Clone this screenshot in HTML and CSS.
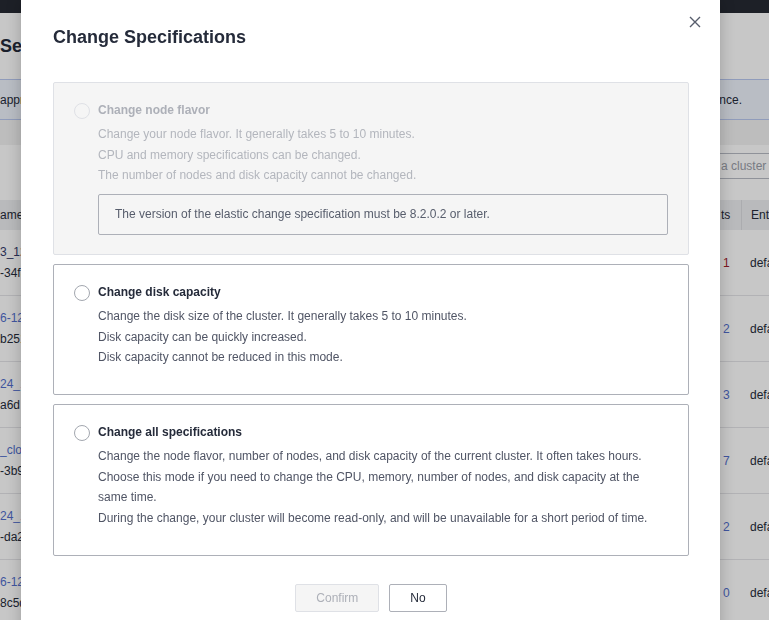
FILE: index.html
```html
<!DOCTYPE html>
<html lang="en">
<head>
<meta charset="utf-8">
<title>Change Specifications</title>
<link rel="stylesheet" href="styles.css">
</head>
<body>
<div class="page">
  <div class="topbar"></div>
  <div class="page-head"><span class="page-title">Ser</span></div>
  <div class="info-bar"><span>appr</span><span>nce.</span></div>
  <div class="strip"></div>
  <div class="toolbar"><div class="search">a cluster n</div></div>
  <div class="table">
    <div class="thead"><span class="c-left">ame</span><span class="c-num">ts</span><span class="c-ent">Ent</span></div>
    <div class="trow"><div class="c-left"><span class="link dark">3_12</span><span class="sub">-34f8</span></div><span class="c-num red">1</span><span class="c-ent">defa</span></div>
    <div class="trow"><div class="c-left"><span class="link">6-12</span><span class="sub">b251</span></div><span class="c-num blue">2</span><span class="c-ent">defa</span></div>
    <div class="trow"><div class="c-left"><span class="link">24_1</span><span class="sub">a6d</span></div><span class="c-num blue">3</span><span class="c-ent">defa</span></div>
    <div class="trow"><div class="c-left"><span class="link">_clo</span><span class="sub">-3b9</span></div><span class="c-num blue">7</span><span class="c-ent">defa</span></div>
    <div class="trow"><div class="c-left"><span class="link">24_1</span><span class="sub">-da2</span></div><span class="c-num blue">2</span><span class="c-ent">defa</span></div>
    <div class="trow"><div class="c-left"><span class="link">6-12</span><span class="sub">8c5d</span></div><span class="c-num blue">0</span><span class="c-ent">defa</span></div>
  </div>
</div>

<div class="mask"></div>

<div class="modal">
  <button class="close" aria-label="Close">
    <svg width="12" height="12" viewBox="0 0 12 12"><path d="M1 1L11 11M11 1L1 11" stroke="#575d6c" stroke-width="1.4" fill="none"/></svg>
  </button>
  <h2 class="modal-title">Change Specifications</h2>

  <div class="options">
    <div class="card card-disabled">
      <span class="radio"></span>
      <div class="card-body">
        <div class="card-title">Change node flavor</div>
        <div class="card-desc">
          <div>Change your node flavor. It generally takes 5 to 10 minutes.</div>
          <div>CPU and memory specifications can be changed.</div>
          <div>The number of nodes and disk capacity cannot be changed.</div>
        </div>
        <div class="notice">The version of the elastic change specification must be 8.2.0.2 or later.</div>
      </div>
    </div>

    <div class="card">
      <span class="radio"></span>
      <div class="card-body">
        <div class="card-title">Change disk capacity</div>
        <div class="card-desc">
          <div>Change the disk size of the cluster. It generally takes 5 to 10 minutes.</div>
          <div>Disk capacity can be quickly increased.</div>
          <div>Disk capacity cannot be reduced in this mode.</div>
        </div>
      </div>
    </div>

    <div class="card">
      <span class="radio"></span>
      <div class="card-body">
        <div class="card-title">Change all specifications</div>
        <div class="card-desc">
          <div>Change the node flavor, number of nodes, and disk capacity of the current cluster. It often takes hours.</div>
          <div>Choose this mode if you need to change the CPU, memory, number of nodes, and disk capacity at the<br>same time.</div>
          <div>During the change, your cluster will become read-only, and will be unavailable for a short period of time.</div>
        </div>
      </div>
    </div>
  </div>

  <div class="footer">
    <button class="btn btn-disabled" disabled>Confirm</button>
    <button class="btn">No</button>
  </div>
</div>
</body>
</html>
```

FILE: styles.css
```css
html, body {
  margin: 0;
  padding: 0;
  width: 769px;
  height: 620px;
  overflow: hidden;
  font-family: "Liberation Sans", Arial, sans-serif;
  font-size: 12px;
  color: #252b3a;
  background: #ffffff;
}

/* ---------- background page ---------- */
.page {
  width: 769px;
  overflow: hidden;
}

.topbar {
  height: 13px;
  background: #262a33;
}

.page-head {
  height: 66px;
  display: flex;
  align-items: center;
  background: #ffffff;
}

.page-title {
  font-size: 18px;
  font-weight: bold;
  line-height: 24px;
  white-space: nowrap;
  color: #252b3a;
}

.info-bar {
  height: 39px;
  display: flex;
  justify-content: space-between;
  align-items: center;
  padding-right: 27px;
  background: #eef3fc;
  border-top: 1px solid #b9c8f0;
  border-bottom: 1px solid #b9c8f0;
  color: #252b3a;
  font-size: 12px;
}

.strip {
  height: 25px;
  background: #f3f3f3;
}

.toolbar {
  height: 47px;
  display: flex;
  align-items: flex-start;
  padding-top: 8px;
  background: #ffffff;
}

.search {
  flex: 1;
  margin-left: 712px;
  height: 24px;
  line-height: 24px;
  padding-left: 8px;
  border: 1px solid #b8bcc4;
  border-right: none;
  color: #9a9ea8;
  white-space: nowrap;
  overflow: hidden;
}

.table {
  display: flex;
  flex-direction: column;
}

.thead, .trow {
  display: grid;
  grid-template-columns: 713px 28px 28px;
}

.thead {
  height: 30px;
  align-items: center;
  background: #eeeff1;
  color: #252b3a;
}

.thead .c-ent {
  align-self: stretch;
  display: flex;
  align-items: center;
  border-left: 1px solid #dcdde0;
}

.trow {
  height: 65px;
  align-items: center;
  background: #ffffff;
  border-bottom: 1px solid #e4e5e8;
}

.c-left {
  display: flex;
  flex-direction: column;
  line-height: 21px;
  white-space: nowrap;
}

.c-num {
  padding-left: 10px;
  white-space: nowrap;
}

.thead .c-num { padding-left: 8px; }

.c-ent {
  padding-left: 9px;
  white-space: nowrap;
}

.link { color: #526ecc; }
.link.dark { color: #333a6b; }
.sub { color: #252b3a; }
.red { color: #a0202a; }
.blue { color: #526ecc; }

/* ---------- mask and modal ---------- */
.mask {
  position: fixed;
  inset: 0;
  background: rgba(0, 0, 0, 0.22);
}

.modal {
  position: absolute;
  left: 21px;
  top: 0;
  width: 699px;
  height: 680px;
  box-sizing: border-box;
  padding: 25px 31px 0 32px;
  background: #ffffff;
  box-shadow: 0 0 14px rgba(0, 0, 0, 0.22);
}

.close {
  position: absolute;
  left: 668px;
  top: 16px;
  width: 12px;
  height: 12px;
  padding: 0;
  border: none;
  background: transparent;
  display: flex;
}

.modal-title {
  margin: 0 0 33px;
  font-size: 18px;
  line-height: 24px;
  font-weight: bold;
  color: #252b3a;
}

.options {
  display: flex;
  flex-direction: column;
  gap: 9px;
}

.card {
  display: flex;
  align-items: flex-start;
  gap: 8px;
  padding: 17px 20px 26.5px;
  border: 1px solid #adb0b8;
  border-radius: 2px;
  background: #ffffff;
}

.radio {
  flex: none;
  width: 14px;
  height: 14px;
  margin-top: 3px;
  border: 1px solid #a3a7af;
  border-radius: 50%;
  background: #ffffff;
}

.card-body {
  flex: 1;
  min-width: 0;
}

.card-title {
  font-weight: bold;
  line-height: 20px;
  color: #252b3a;
}

.card-desc {
  margin-top: 4px;
  line-height: 20.5px;
  color: #505565;
}

.notice {
  margin-top: 8.5px;
  padding: 10px 16px;
  line-height: 19px;
  border: 1px solid #adb0b8;
  border-radius: 2px;
  color: #575d6c;
}

.card-disabled {
  padding-bottom: 19px;
  background: #f5f5f5;
  border-color: #dfe1e6;
}

.card-disabled .radio {
  border-color: #dfe1e6;
  background: #f5f5f5;
}

.card-disabled .card-title {
  color: #adb0b8;
}

.card-disabled .card-desc {
  color: #b3b6bd;
}

.footer {
  display: flex;
  justify-content: center;
  gap: 10px;
  margin-top: 28px;
}

.btn {
  height: 28px;
  padding: 0 20px;
  border: 1px solid #adb0b8;
  border-radius: 2px;
  background: #ffffff;
  color: #252b3a;
  font-family: "Liberation Sans", Arial, sans-serif;
  font-size: 12px;
  line-height: 26px;
}

.btn-disabled {
  background: #f5f5f5;
  border-color: #dfe1e6;
  color: #adb0b8;
}
```
